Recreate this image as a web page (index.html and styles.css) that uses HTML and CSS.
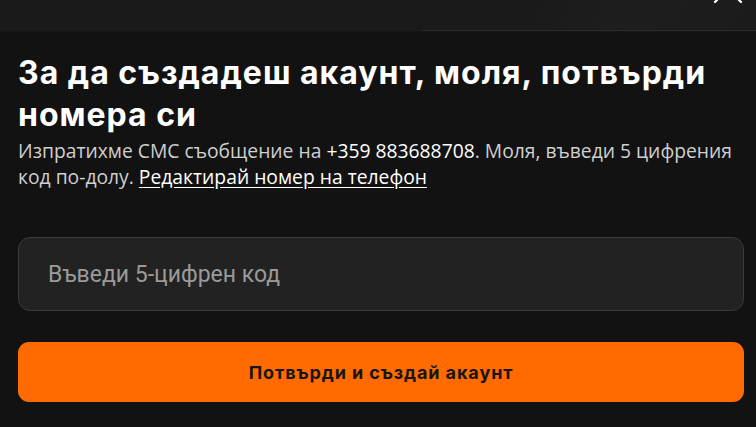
FILE: index.html
```html
<!DOCTYPE html>
<html lang="bg">
<head>
<meta charset="utf-8">
<title>Потвърди номера</title>
<link rel="stylesheet" href="styles.css">
</head>
<body>
<header class="topbar">
  <button class="close" aria-label="Затвори">
    <svg width="30" height="30" viewBox="0 0 30 30"><path d="M2 2L28 28M28 2L2 28" stroke="#fff" stroke-width="2.2" stroke-linecap="round" fill="none"/></svg>
  </button>
</header>
<main class="content">
  <h1 class="title">За да създадеш акаунт, моля, потвърди номера си</h1>
  <p class="lead">Изпратихме СМС съобщение на <span class="phone">+359 883688708</span>. Моля, въведи 5 цифрения код по-долу. <a class="edit" href="#">Редактирай номер на телефон</a></p>
  <form class="form">
    <input class="code" type="text" placeholder="Въведи 5-цифрен код">
    <button class="submit" type="button">Потвърди и създай акаунт</button>
  </form>
</main>
</body>
</html>
```
FILE: styles.css
```css
html, body {
  margin: 0;
  padding: 0;
  background: #121212;
  font-family: Inter, "Noto Sans", sans-serif;
  color: #fff;
}
.topbar {
  position: relative;
  height: 31px;
  background:
    linear-gradient(#2a2a2a, #2a2a2a) right bottom / calc(100% - 422px) 1px no-repeat,
    linear-gradient(115deg, #1a1a1a 0%, #1a1a1a 70%, #1e1e1e 82%, #1b1b1b 100%);
  border-bottom: 1px solid #161616;
  overflow: hidden;
}
.close {
  position: absolute;
  left: 713px;
  top: -26px;
  padding: 0;
  border: 0;
  background: none;
  line-height: 0;
}
.content {
  padding: 20px 12px 0 18px;
}
.title {
  margin: 0;
  font-family: Inter, sans-serif;
  font-size: 32px;
  line-height: 42px;
  font-weight: 700;
  letter-spacing: 1px;
}
.lead {
  margin: 2px 0 0;
  font-family: "Open Sans", sans-serif;
  font-size: 19.3px;
  line-height: 26px;
  color: #cfcfcf;
}
.phone {
  color: #fff;
}
.edit {
  color: #fff;
  font-weight: 500;
  text-decoration: underline;
  text-underline-offset: 3px;
}
.form {
  display: flex;
  flex-direction: column;
  gap: 31px;
  margin-top: 47px;
}
.code {
  box-sizing: border-box;
  height: 74px;
  width: 100%;
  padding: 0 29px;
  border: 1px solid #3a3a3a;
  border-radius: 12px;
  background: #222222;
  color: #fff;
  font-family: Roboto, sans-serif;
  font-size: 23px;
  outline: none;
}
.code::placeholder {
  color: #9a9a9a;
}
.submit {
  height: 60px;
  width: 100%;
  border: 0;
  border-radius: 11px;
  background: #ff6b00;
  color: #161616;
  font-family: Inter, sans-serif;
  font-size: 18px;
  font-weight: 700;
  letter-spacing: 0.9px;
}
```
